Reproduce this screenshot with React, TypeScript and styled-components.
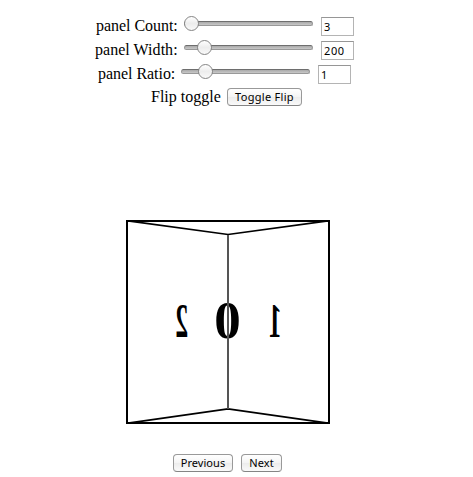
import React from "react";
import styled, { createGlobalStyle } from "styled-components";

const GlobalStyle = createGlobalStyle`
  * { box-sizing: border-box; }
  body {
    margin: 0;
    background: #fff;
    color: #000;
    font: 16px "Liberation Serif", serif;
  }
`;

const Page = styled.main`
  width: 450px;
  height: 477px;
  padding-top: 14px;
  display: flex;
  flex-direction: column;
  align-items: center;
  overflow: hidden;
`;

const Row = styled.div<{ $shift?: number }>`
  height: 24px;
  flex: none;
  display: flex;
  align-items: flex-start;
  margin-left: ${({ $shift = 0 }) => $shift}px;
`;

const Label = styled.label<{ $width: number; $tracking?: number }>`
  width: ${({ $width }) => $width}px;
  line-height: 24px;
  letter-spacing: ${({ $tracking = 0 }) => $tracking}px;
  white-space: nowrap;
`;

const Slider = styled.div`
  width: 129px;
  height: 15px;
  margin: 2px 8px 0 0;
  display: grid;
  align-items: center;
`;

const Track = styled.div`
  grid-area: 1 / 1;
  height: 5px;
  border-radius: 3px;
  border: 1px solid #999;
  border-top-color: #6e6e6e;
  background: linear-gradient(#a9a9a9, #c8c8c8);
`;

const Thumb = styled.div<{ $offset: number }>`
  grid-area: 1 / 1;
  width: 15px;
  height: 15px;
  margin-left: ${({ $offset }) => $offset}px;
  border: 1px solid #858585;
  border-radius: 50%;
  background: linear-gradient(#fff, #ededed 50%, #f9f9f9);
  z-index: 1;
`;

const Field = styled.input`
  width: 33px;
  height: 19px;
  margin: 3px 0 0;
  padding: 0 2px;
  border: 1px solid #b4b4b4;
  border-top-color: #969696;
  border-radius: 0;
  outline: none;
  font: 11px "Noto Sans", sans-serif;
  letter-spacing: 0.6px;
  color: #000;
`;

const Button = styled.button<{ $width: number; $tracking: number }>`
  width: ${({ $width }) => $width}px;
  height: 18px;
  flex: none;
  padding: 0 0 1px;
  border: 1px solid #999;
  border-bottom-color: #858585;
  border-radius: 4px;
  background: linear-gradient(#fff, #f4f4f4 50%, #ececec 51%, #fafafa);
  font: 11px/15px "Noto Sans", sans-serif;
  letter-spacing: ${({ $tracking }) => $tracking}px;
  color: #000;
  white-space: nowrap;
`;

const ToggleRow = styled(Row)`
  height: 22px;
  & > label { line-height: 22px; }
  & > button { margin-top: 2px; }
`;

const Carousel = styled.svg`
  display: block;
  width: 204px;
  height: 204px;
  flex: none;
  margin: 112px 0 0 6px;
  overflow: visible;
`;

const Numeral = styled.text`
  font-family: "Liberation Serif", serif;
  font-weight: 700;
  text-anchor: middle;
`;

const Navigation = styled.nav`
  display: flex;
  gap: 8px;
  margin: 30px 0 0 5px;
`;

const controls = [
  { name: "panel Count:", value: "3", labelWidth: 88, offset: 0, shift: 0, tracking: -0.04 },
  { name: "panel Width:", value: "200", labelWidth: 89, offset: 13, shift: -1, tracking: 0.04 },
  { name: "panel Ratio:", value: "1", labelWidth: 83, offset: 17, shift: -1, tracking: -0.04 },
];

export default function App() {
  return (
    <>
      <GlobalStyle />
      <Page>
        {controls.map((control) => (
          <Row key={control.name} $shift={control.shift}>
            <Label $width={control.labelWidth} $tracking={control.tracking}>{control.name}</Label>
            <Slider>
              <Track />
              <Thumb $offset={control.offset} />
            </Slider>
            <Field defaultValue={control.value} />
          </Row>
        ))}
        <ToggleRow $shift={3}>
          <Label $width={76}>Flip toggle</Label>
          <Button $width={75} $tracking={0.3}>Toggle Flip</Button>
        </ToggleRow>
        <Carousel viewBox="0 0 204 204">
          <g fill="none" stroke="#000">
            <path d="M2 .8 102 14.5 202 .8M2 203.2 102 188.8 202 203.2" strokeWidth="1.7" />
            <rect x="1" y="1" width="202" height="202" strokeWidth="2" />
          </g>
          <Numeral fontSize="47.5" transform="translate(55.8 117) scale(-.54 1)">2</Numeral>
          <Numeral fontSize="47.5" transform="translate(149 117) scale(-.54 1)">1</Numeral>
          <Numeral fontSize="52" transform="translate(101.5 117.8) scale(1.02 1)">0</Numeral>
          <path d="M102 15V189" stroke="#555" strokeWidth="2" />
        </Carousel>
        <Navigation>
          <Button $width={60} $tracking={0.05}>Previous</Button>
          <Button $width={41} $tracking={0.1}>Next</Button>
        </Navigation>
      </Page>
    </>
  );
}
